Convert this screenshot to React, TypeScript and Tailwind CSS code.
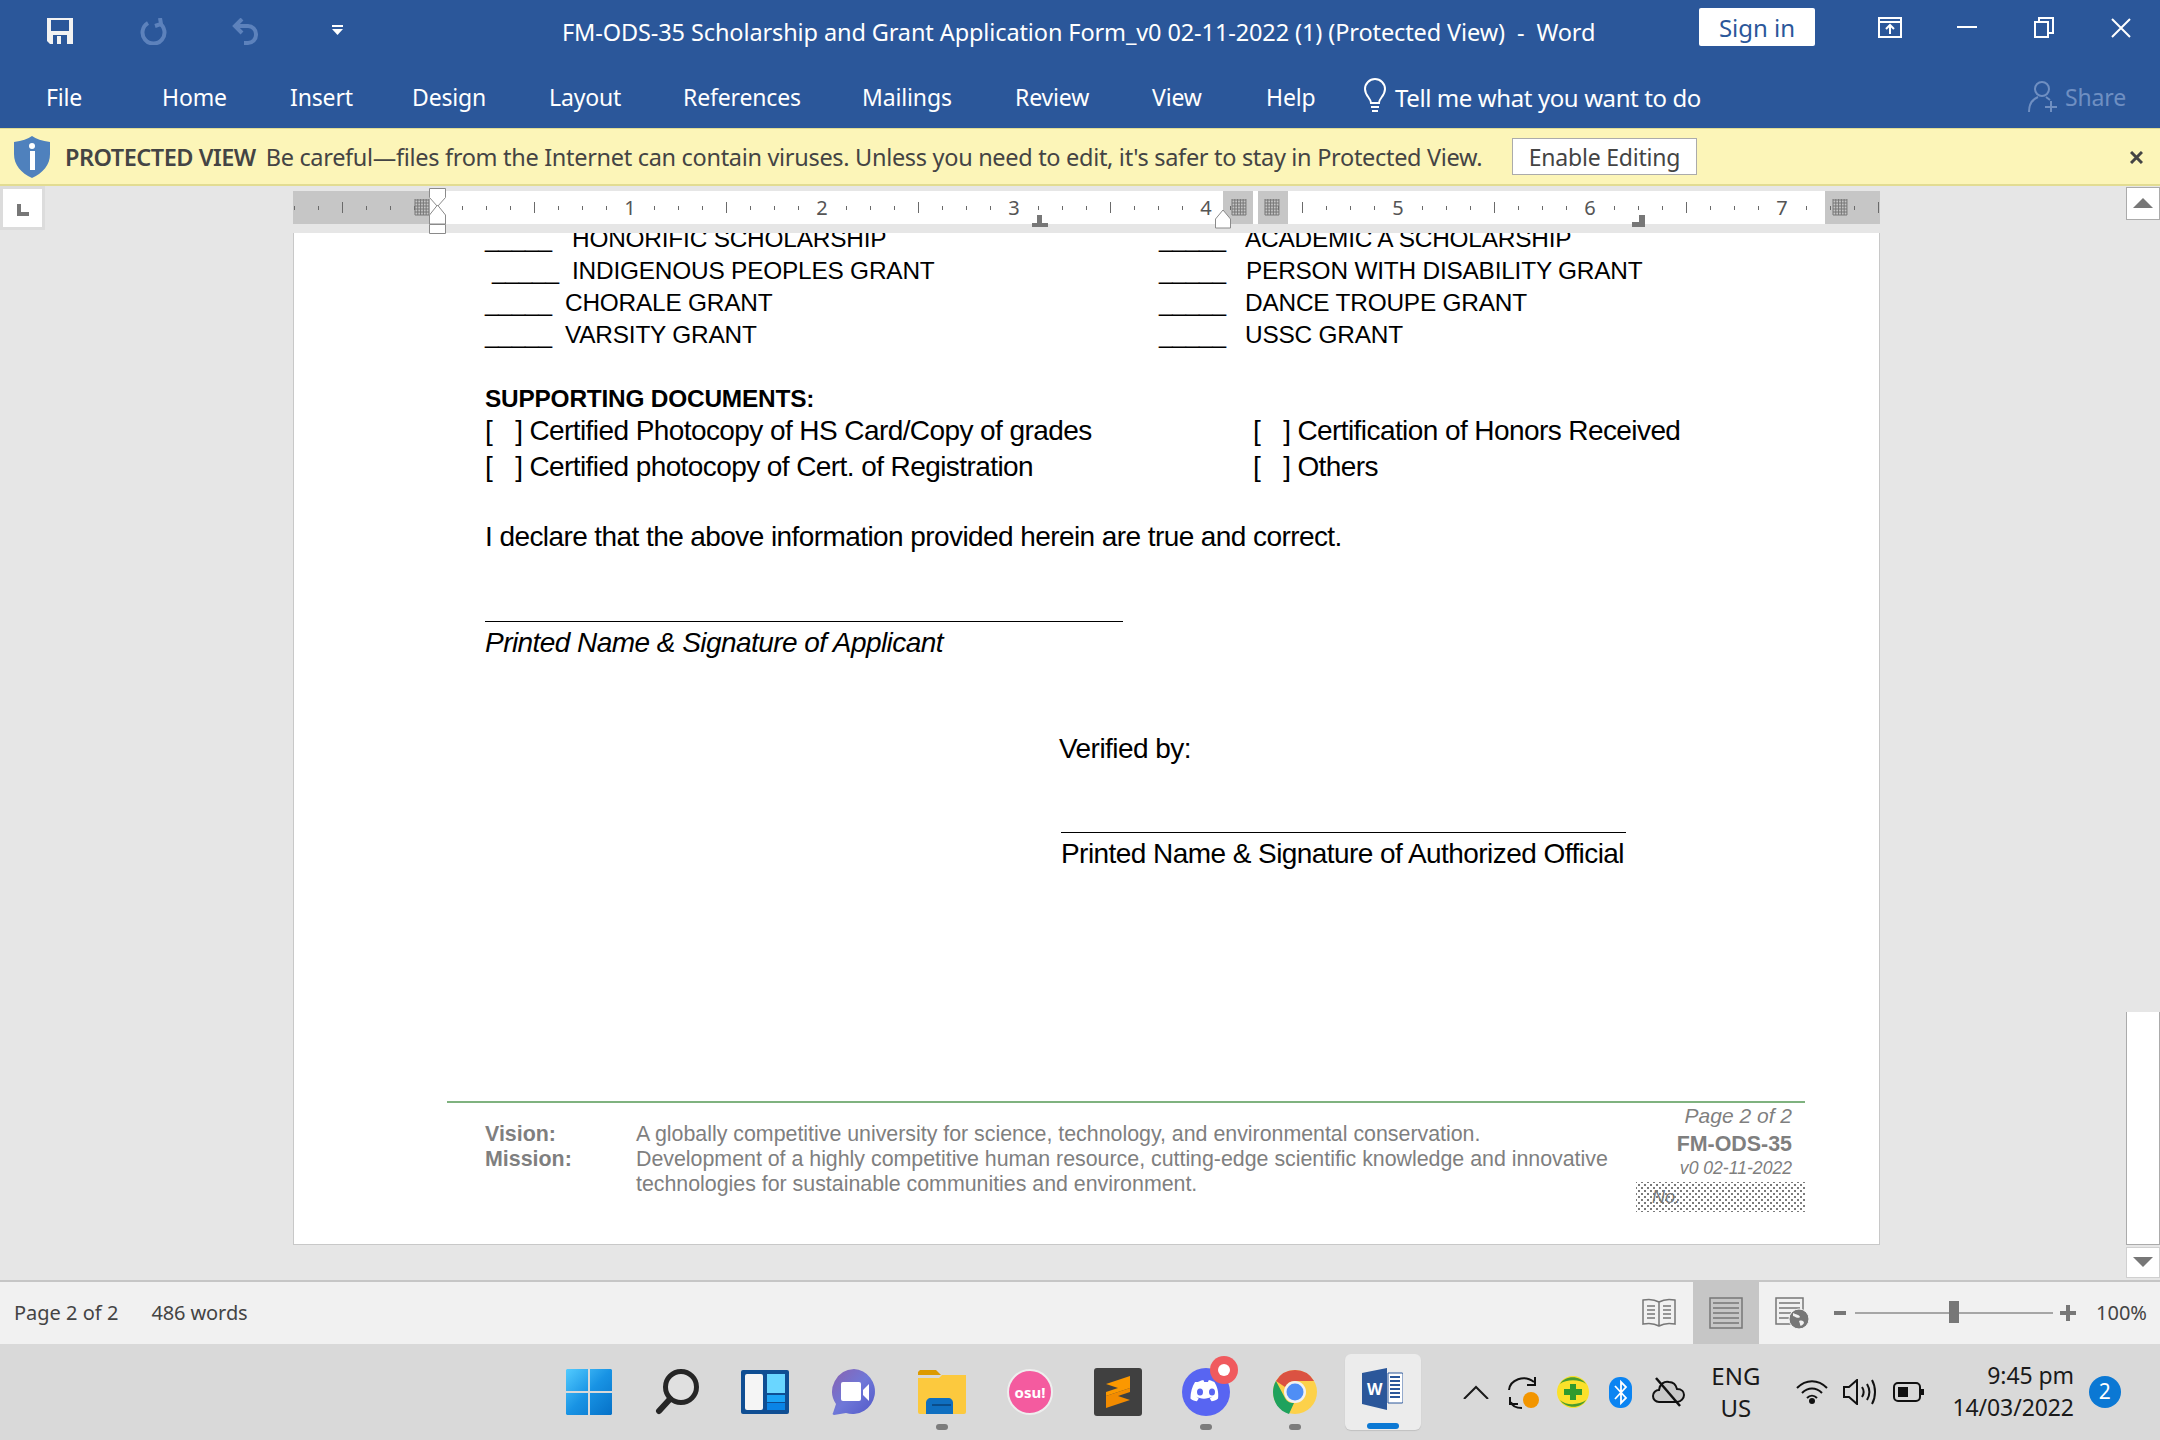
const ui = "font-['Noto_Sans',sans-serif]";

const tabs = [
  { label: 'File', w: 'w-[116px]' },
  { label: 'Home', w: 'w-[128px]' },
  { label: 'Insert', w: 'w-[122px]' },
  { label: 'Design', w: 'w-[137px]' },
  { label: 'Layout', w: 'w-[134px]' },
  { label: 'References', w: 'w-[179px]' },
  { label: 'Mailings', w: 'w-[153px]' },
  { label: 'Review', w: 'w-[137px]' },
  { label: 'View', w: 'w-[114px]' },
  { label: 'Help', w: 'w-[96px]' },
];

const grants = [
  { left: 'HONORIFIC SCHOLARSHIP', right: 'ACADEMIC A SCHOLARSHIP', leftPad: 'pl-0', leftGap: 'w-[87px]', rightGap: 'w-[86px]' },
  { left: 'INDIGENOUS PEOPLES GRANT', right: 'PERSON WITH DISABILITY GRANT', leftPad: 'pl-[7px]', leftGap: 'w-[80px]', rightGap: 'w-[87px]' },
  { left: 'CHORALE GRANT', right: 'DANCE TROUPE GRANT', leftPad: 'pl-0', leftGap: 'w-[80px]', rightGap: 'w-[86px]' },
  { left: 'VARSITY GRANT', right: 'USSC GRANT', leftPad: 'pl-0', leftGap: 'w-[80px]', rightGap: 'w-[86px]' },
];

function Ruler() {
  const ticks = [];
  for (let i = 0; i <= 66; i++) {
    const x = i * 24 + 1;
    const pos = i - 6;
    if (pos % 8 === 0 && pos !== 0) continue;
    if (i === 6 || i === 38 || i === 40) continue;
    const tall = (pos + 400) % 4 === 0;
    ticks.push(<rect key={i} x={x} y={tall ? 11 : 15} width={1} height={tall ? 11 : 4} fill="#6a6a6a" />);
  }
  return (
    <div className="relative flex h-[33px] w-[1587px]">
      <div className="w-[137px] bg-[#c6c6c6]" />
      <div className="w-[793px] bg-white" />
      <div className="w-[30px] bg-[#c6c6c6]" />
      <div className="w-[5px] bg-white" />
      <div className="w-[30px] bg-[#c6c6c6]" />
      <div className="w-[537px] bg-white" />
      <div className="w-[55px] bg-[#c6c6c6]" />
      <svg className="absolute left-0 top-[-5px] h-[46px] w-[1587px]" viewBox="0 -5 1587 46" style={{ overflow: 'visible' }}>
        {ticks}
        {[1, 2, 3, 4, 5, 6, 7].map((n) => (
          <text key={n} x={144 + n * 192 + 1} y={24} fontSize="20" fill="#555" fontFamily="Noto Sans" textAnchor="middle">{n}</text>
        ))}
        {[129, 946, 979, 1547].map((x) => (
          <g key={x} stroke="#777" strokeWidth="1">
            {[0, 3, 6, 9, 12, 15].map((d) => <line key={d} x1={x - 7} x2={x + 7} y1={9 + d} y2={9 + d} />)}
            {[0, 3, 6, 9, 12, 15].map((d) => <line key={d} x1={x - 7 + d * 0.93} x2={x - 7 + d * 0.93} y1={8} y2={24} />)}
          </g>
        ))}
        <g fill="#fff" stroke="#8a8a8a" strokeWidth="1" transform="translate(0,-5)">
          <path d="M136.5 2.5h16v9l-8 9-8-9z" />
          <path d="M144.5 19l8 10v9h-16v-9z" />
          <path d="M136.5 38.5h16v9h-16z" />
          <path d="M922.5 33v9h15v-9l-7.500-9z" />
        </g>
        <path d="M744 33h5v8h6v4h-16v-4h5z" fill="#777" transform="translate(0,-9)" />
        <path d="M1346 33h6v12h-13v-5h7z" fill="#777" transform="translate(0,-9)" />
      </svg>
    </div>
  );
}

function Page() {
  const doc = "font-['Liberation_Sans',Arial,sans-serif] text-black";
  return (
    <div className={`flex h-[1012px] w-[1587px] flex-col overflow-hidden border-x border-b border-[#c8c8c8] bg-white ${doc}`}>
      <div className="mt-[-10px] flex flex-col pl-[191px] text-[24.4px] tracking-[-0.2px]">
        {grants.map((g) => (
          <div key={g.left} className="flex h-[32px] items-center">
            <div className={`flex w-[674px] ${g.leftPad}`}>
              <span className={g.leftGap}>_____</span>
              <span>{g.left}</span>
            </div>
            <div className="flex">
              <span className={g.rightGap}>_____</span>
              <span>{g.right}</span>
            </div>
          </div>
        ))}
      </div>
      <div className="mt-[32px] pl-[191px] text-[24.4px] font-bold leading-[32px] tracking-[-0.2px]">SUPPORTING DOCUMENTS:</div>
      <div className="mt-[-2px] flex flex-col pl-[191px] text-[28px] leading-[36px] tracking-[-0.58px]">
        <div className="flex">
          <span className="w-[768px]"><span className="mr-[23px]">[</span><span className="mr-[7px]">]</span>Certified Photocopy of HS Card/Copy of grades</span>
          <span><span className="mr-[23px]">[</span><span className="mr-[7px]">]</span>Certification of Honors Received</span>
        </div>
        <div className="flex">
          <span className="w-[768px]"><span className="mr-[23px]">[</span><span className="mr-[7px]">]</span>Certified photocopy of Cert. of Registration</span>
          <span><span className="mr-[23px]">[</span><span className="mr-[7px]">]</span>Others</span>
        </div>
      </div>
      <div className="mt-[34px] pl-[191px] text-[28px] leading-[36px] tracking-[-0.58px]">I declare that the above information provided herein are true and correct.</div>
      <div className="ml-[191px] mt-[66px] h-px w-[638px] bg-black" />
      <div className="mt-[3px] pl-[191px] text-[28px] italic leading-[36px] tracking-[-0.55px]">Printed Name &amp; Signature of Applicant</div>
      <div className="mt-[70px] pl-[765px] text-[28px] leading-[36px] tracking-[-0.55px]">Verified by:</div>
      <div className="ml-[767px] mt-[65px] h-px w-[565px] bg-black" />
      <div className="mt-[3px] pl-[767px] text-[28px] leading-[36px] tracking-[-0.56px]">Printed Name &amp; Signature of Authorized Official</div>

      <div className="mt-auto h-[143px] pl-[153px] pr-[74px]">
        <div className="h-[2px] bg-[#7fb27f]" />
        <div className="flex text-[#7f7f7f]">
          <div className="flex pl-[38px] pt-[19px] text-[21.4px] leading-[25px]">
            <div className="w-[151px] font-bold">
              <div>Vision:</div>
              <div>Mission:</div>
            </div>
            <div className="w-[990px] tracking-[-0.02px]">
              A globally competitive university for science, technology, and environmental conservation.
              <br />
              Development of a highly competitive human resource, cutting-edge scientific knowledge and innovative
              <br />
              technologies for sustainable communities and environment.
            </div>
          </div>
          <div className="ml-auto flex w-[169px] flex-col items-end">
            <div className="pr-[13px] text-[21px] italic leading-[26px]">Page 2 of 2</div>
            <div className="pr-[13px] pt-[1px] text-[21.4px] font-bold leading-[28px]">FM-ODS-35</div>
            <div className="pr-[13px] text-[17.6px] italic leading-[20px]">v0 02-11-2022</div>
            <div className="mt-[4px] h-[30px] w-[169px] bg-[radial-gradient(#7a7a7a_1.2px,transparent_1.3px),radial-gradient(#7a7a7a_1.2px,transparent_1.3px)] bg-[length:6px_6px] bg-[position:0_0,3px_3px] pl-[16px] text-[18px] italic leading-[30px] text-[#777]">No.</div>
          </div>
        </div>
      </div>
    </div>
  );
}

function Scrollbar() {
  return (
    <div className="flex w-[34px] flex-col pt-[1px]">
      <div className="flex h-[33px] items-center justify-center border border-[#ababab] bg-white">
        <div className="h-0 w-0 border-x-[10px] border-b-[10px] border-x-transparent border-b-[#777]" />
      </div>
      <div className="flex-1 pt-[792px]">
        <div className="h-[233px] border-x border-b border-[#ababab] bg-white" />
      </div>
      <div className="mt-[2px] flex h-[32px] items-center justify-center border border-[#d0d0d0] bg-white">
        <div className="h-0 w-0 border-x-[10px] border-t-[10px] border-x-transparent border-t-[#777]" />
      </div>
      <div className="h-[2px]" />
    </div>
  );
}

function TaskIcon({ children, dot }: { children: React.ReactNode; dot?: boolean }) {
  return (
    <div className="relative flex h-[96px] w-[88.2px] items-center justify-center">
      {children}
      {dot && <div className="absolute left-[38px] top-[80px] h-[6px] w-[12px] rounded-full bg-[#7c7c7c]" />}
    </div>
  );
}

export default function App() {
  return (
    <div className={`relative flex h-[1440px] w-[2160px] flex-col overflow-hidden bg-[#e6e6e6] ${ui}`}>
      {/* title bar */}
      <div className="h-[128px] bg-[#2b579a] text-white">
        <div className="relative flex h-[64px] items-start">
          <div className="flex items-start pl-[47px] pt-[18px]">
            <svg width="26" height="26" viewBox="0 0 26 26">
              <path d="M0 0h26v26H3l-3-3z" fill="#f2f2f2" />
              <rect x="4" y="2" width="18" height="11" fill="#2b579a" />
              <rect x="6" y="17" width="14" height="9" fill="#2b579a" />
              <rect x="10" y="18" width="4" height="8" fill="#f2f2f2" />
            </svg>
            <svg className="ml-[67px]" width="27" height="27" viewBox="0 0 27 27" fill="none" stroke="#5d82bc" strokeWidth="4">
              <path d="M8 5A11 11 0 1 0 19 5" />
              <path d="M18 1l1 6-6 2" transform="translate(2,-1)" />
            </svg>
            <svg className="ml-[65px]" width="27" height="27" viewBox="0 0 27 27" fill="none" stroke="#5d82bc" strokeWidth="4">
              <path d="M10 1L3 8l7 7" />
              <path d="M3 8h13a8 8 0 0 1 8 8v1a8 8 0 0 1-8 8h-4" />
            </svg>
            <svg className="ml-[73px] mt-[7px]" width="11" height="10" viewBox="0 0 11 10" fill="#fff">
              <rect x="0" y="0" width="11" height="2" />
              <path d="M0 4h11L5.500 10z" />
            </svg>
          </div>
          <div className="absolute left-[562px] top-[14px] text-[23.5px] leading-[36px] tracking-[-0.11px] whitespace-pre">FM-ODS-35 Scholarship and Grant Application Form_v0 02-11-2022 (1) (Protected View)  -  Word</div>
          <div className="ml-auto flex items-start pr-[29px]">
            <div className="mt-[8px] flex h-[38px] w-[116px] items-center justify-center rounded-[2px] bg-white pt-[2px] text-[24px] text-[#2b579a]">Sign in</div>
            <svg className="ml-[63px] mt-[17px]" width="24" height="21" viewBox="0 0 24 21" fill="none" stroke="#fff" strokeWidth="2">
              <path d="M1 1h22v19H1zM1 5h22M12 17V8M8 12l4-4 4 4" />
            </svg>
            <div className="ml-[55px] mt-[26px] h-[2px] w-[20px] bg-white" />
            <svg className="ml-[57px] mt-[17px]" width="20" height="21" viewBox="0 0 20 21" fill="none" stroke="#fff" strokeWidth="2">
              <path d="M1 5h13v15H1zM5 5V1h14v15h-5" />
            </svg>
            <svg className="ml-[57px] mt-[18px]" width="20" height="20" viewBox="0 0 20 20" stroke="#fff" strokeWidth="2">
              <path d="M1 1l18 18M19 1L1 19" />
            </svg>
          </div>
        </div>
        <div className="flex h-[64px] items-center pl-[46px] pt-[3px] text-[23px] tracking-[-0.15px]">
          {tabs.map((t) => (
            <div key={t.label} className={t.w}>{t.label}</div>
          ))}
          <svg className="ml-[1px] mt-[-3px]" width="24" height="36" viewBox="0 0 24 36" fill="none" stroke="#fff" strokeWidth="2">
            <path d="M8 25c0-5-6-7-6-14a10 10 0 0 1 20 0c0 7-6 9-6 14zM8 29h8M9 33h6" />
          </svg>
          <div className="ml-[8px] text-[24px] tracking-[-0.4px]">Tell me what you want to do</div>
          <div className="ml-auto flex items-center pr-[34px] text-[#6f8fc2]">
            <svg className="mt-[-3px]" width="30" height="33" viewBox="0 0 30 33" fill="none" stroke="#6f8fc2" strokeWidth="2">
              <circle cx="14" cy="9" r="7" />
              <path d="M1 32c0-8 4-13 9-15M18 17l4 3M23 21v11M17 27h12" />
            </svg>
            <span className="ml-[7px]">Share</span>
          </div>
        </div>
      </div>

      {/* protected view bar */}
      <div className="flex h-[58px] items-center border-b-2 border-t border-b-[#e2dc92] border-t-[#e2dc92] bg-[#fcf5b8] pt-[3px] text-[23.5px] text-[#444]">
        <svg className="ml-[14px] mt-[-3px]" width="36" height="42" viewBox="0 0 36 42">
          <path d="M18 0c4 3 10 5 18 6v12c0 11-7 19-18 24C7 37 0 29 0 18V6c8-1 14-3 18-6z" fill="#4f81bd" />
          <circle cx="18" cy="10" r="3" fill="#fff" />
          <rect x="16" y="15" width="5" height="19" fill="#fff" />
        </svg>
        <span className="ml-[15px] font-semibold tracking-[-0.5px]">PROTECTED VIEW</span>
        <span className="ml-[10px] tracking-[-0.31px]">Be careful—files from the Internet can contain viruses. Unless you need to edit, it's safer to stay in Protected View.</span>
        <div className="absolute left-[1512px] top-[138px] flex h-[37px] w-[185px] items-center justify-center border border-[#ababab] bg-white pt-[2px] text-[23px] tracking-[-0.2px]">Enable Editing</div>
        <svg className="absolute left-[2130px] top-[151px]" width="13" height="13" viewBox="0 0 13 13" stroke="#444" strokeWidth="3">
          <path d="M1 1l11 11M12 1L1 12" />
        </svg>
      </div>

      {/* document area */}
      <div className="flex h-[1094px]">
        <div className="w-[293px]">
          <div className="flex h-[44px] w-[45px] items-center justify-center border-[3px] border-[#dcdcdc] bg-white">
            <svg className="mt-[4px]" width="12" height="12" viewBox="0 0 12 12" fill="#777">
              <path d="M0 0h4v8h8v4H0z" />
            </svg>
          </div>
        </div>
        <div className="flex flex-col pt-[5px]">
          <Ruler />
          <div className="mt-[9px]">
            <Page />
          </div>
        </div>
        <div className="flex-1" />
        <Scrollbar />
      </div>

      {/* status bar */}
      <div className="flex h-[64px] items-center border-t-2 border-[#c6c6c6] bg-[#f1f1f1] text-[20px] text-[#444]">
        <span className="ml-[14px]">Page 2 of 2</span>
        <span className="ml-[33px] tracking-[-0.1px]">486 words</span>
        <div className="ml-auto flex h-full items-center">
          <svg width="34" height="30" viewBox="0 0 34 30" fill="none" stroke="#777" strokeWidth="1.500">
            <path d="M17 4C12 1 6 1 1 2v24c5-1 11-1 16 2 5-3 11-3 16-2V2c-5-1-11-1-16 2zM17 4v24M5 8h8M5 12h8M5 16h8M5 20h8M21 8h8M21 12h8M21 16h8M21 20h8" />
          </svg>
          <div className="ml-[17px] flex h-full w-[66px] items-center justify-center bg-[#c6c6c6]">
            <svg width="34" height="32" viewBox="0 0 34 32" fill="none" stroke="#777" strokeWidth="1.500">
              <path d="M1 1h32v30H1zM4 6h26M4 11h26M4 16h26M4 21h26M4 26h26" />
            </svg>
          </div>
          <svg className="ml-[16px]" width="34" height="32" viewBox="0 0 34 32">
            <path d="M1 1h27v26H1zM4 6h21M4 11h21M4 16h12M4 21h10" fill="none" stroke="#777" strokeWidth="1.500" />
            <circle cx="24" cy="22" r="10" fill="#777" stroke="#f1f1f1" strokeWidth="1" />
            <path d="M18 16c3 2 6 1 7 4-2 2-4 0-7-1zM24 24c3-1 5 0 5 2-2 3-4 4-4 1z" fill="#f1f1f1" />
          </svg>
          <div className="ml-[25px] h-[4px] w-[12px] bg-[#777]" />
          <div className="relative ml-[9px] h-[2px] w-[198px] bg-[#a6a6a6]">
            <div className="absolute left-[94px] top-[-11px] h-[22px] w-[10px] bg-[#777]" />
          </div>
          <div className="relative ml-[7px] h-[16px] w-[16px]">
            <div className="absolute left-0 top-[6px] h-[4px] w-[16px] bg-[#777]" />
            <div className="absolute left-[6px] top-0 h-[16px] w-[4px] bg-[#777]" />
          </div>
          <span className="ml-[20px] w-[64px]">100%</span>
        </div>
      </div>

      {/* taskbar */}
      <div className="flex h-[96px] items-start bg-[#d9d9d9] pl-[545px] text-[#1a1a1a]">
        <TaskIcon>
          <svg width="46" height="46" viewBox="0 0 46 46">
            <defs>
              <linearGradient id="win" x1="0" y1="0" x2="1" y2="1">
                <stop offset="0" stopColor="#52cbff" />
                <stop offset="0.5" stopColor="#1893e4" />
                <stop offset="1" stopColor="#0671c7" />
              </linearGradient>
            </defs>
            <path d="M1 0h21v22H0V1zM24 0h21l1 1v21H24zM0 24h22v22H1l-1-1zM24 24h22v21l-1 1H24z" fill="url(#win)" />
          </svg>
        </TaskIcon>
        <TaskIcon>
          <svg width="44" height="46" viewBox="0 0 44 46" fill="none" stroke="#262626" strokeLinecap="round">
            <circle cx="26" cy="18" r="15.500" fill="#e0e0e0" strokeWidth="5" />
            <path d="M15 30L4 42" strokeWidth="6" />
          </svg>
        </TaskIcon>
        <TaskIcon>
          <svg width="48" height="44" viewBox="0 0 48 44">
            <rect width="48" height="44" rx="2" fill="#0f4e93" />
            <rect x="4" y="4" width="18" height="36" rx="2" fill="#f5f5f5" />
            <rect x="26" y="4" width="18" height="19" fill="#6ad6ff" />
            <rect x="26" y="25" width="18" height="7" fill="#1ba3f5" />
            <rect x="26" y="33" width="18" height="7" fill="#0a84e6" />
          </svg>
        </TaskIcon>
        <TaskIcon>
          <svg width="46" height="46" viewBox="0 0 46 46">
            <defs>
              <linearGradient id="meet" x1="0" y1="0" x2="1" y2="1">
                <stop offset="0" stopColor="#8a62b0" />
                <stop offset="0.5" stopColor="#6f78d8" />
                <stop offset="1" stopColor="#5258c8" />
              </linearGradient>
            </defs>
            <path d="M23 0a22.500 22.500 0 1 1-8 44l-12 2c-1 0-2-1-1-2l3-9A22.500 22.500 0 0 1 23 0z" fill="url(#meet)" />
            <rect x="10" y="13" width="20" height="19" rx="2" fill="#fff" />
            <path d="M32 21l6-6v17l-6-6z" fill="#fff" />
          </svg>
        </TaskIcon>
        <TaskIcon dot>
          <svg width="48" height="44" viewBox="0 0 48 44">
            <path d="M0 2l2-2h16l5 5h-23z" fill="#dc9a00" />
            <path d="M0 8h21l3-3h24v37a2 2 0 0 1-2 2H2a2 2 0 0 1-2-2z" fill="#fcc93e" />
            <path d="M8 44V33c0-3 2-5 5-5h17c3 0 5 2 5 5v11z" fill="#0f6fc0" />
            <rect x="14" y="34" width="19" height="2" fill="#0a4d8a" />
          </svg>
        </TaskIcon>
        <TaskIcon>
          <div className="flex h-[46px] w-[46px] items-center justify-center rounded-full border-2 border-[#eeeeee] bg-[#f45b9f] text-[15px] font-bold text-white">osu!</div>
        </TaskIcon>
        <TaskIcon>
          <svg width="48" height="48" viewBox="0 0 48 48">
            <rect width="48" height="48" rx="3" fill="#404040" />
            <path d="M36 8v12L12 28V24l12-4-12-4V16z" fill="#fb9800" />
            <path d="M12 40V28l24-8v4l-12 4 12 4z" fill="#f28b00" />
          </svg>
        </TaskIcon>
        <TaskIcon dot>
          <div className="relative h-[48px] w-[48px]">
            <svg width="48" height="48" viewBox="0 0 48 48">
              <circle cx="24" cy="24" r="24" fill="#5865f2" />
              <path d="M15 14c3-1 5-2 6-2l1 2h4l1-2c1 0 3 1 6 2 3 5 5 11 4 18-2 2-5 3-7 3l-2-3 3-2c-6 3-13 3-18 0l3 2-2 3c-2 0-5-1-7-3 0-7 2-13 5-18z" fill="#fff" transform="translate(2,1) scale(0.92)" />
              <ellipse cx="18" cy="24" rx="3" ry="3.500" fill="#5865f2" />
              <ellipse cx="30" cy="24" rx="3" ry="3.500" fill="#5865f2" />
            </svg>
            <div className="absolute left-[28px] top-[-12px] flex h-[28px] w-[28px] items-center justify-center rounded-full bg-[#f05a5e]">
              <div className="h-[12px] w-[12px] rounded-full bg-white" />
            </div>
          </div>
        </TaskIcon>
        <TaskIcon dot>
          <svg width="44" height="44" viewBox="0 0 44 44">
            <circle cx="22" cy="22" r="22" fill="#fdd14a" />
            <path d="M22 0a22 22 0 0 1 19 11H22a11 11 0 0 0-10 6L3 11A22 22 0 0 1 22 0z" fill="#db5242" />
            <path d="M3 11l9 17c2 4 5 5 9 5l-5 11C6 41 0 32 0 22c0-4 1-8 3-11z" fill="#1fa25d" />
            <circle cx="22" cy="22" r="11" fill="#f1f1f1" />
            <circle cx="22" cy="22" r="8.500" fill="#4f8ef5" />
          </svg>
        </TaskIcon>
        <TaskIcon>
          <div className="absolute left-[6px] top-[10px] flex h-[76px] w-[76px] items-center justify-center rounded-[6px] bg-[#ececec] pb-[6px] shadow-[0_1px_1px_#c0c0c0]">
            <svg width="41" height="42" viewBox="0 0 41 42">
              <path d="M26 5h14a1 1 0 0 1 1 1v28a1 1 0 0 1-1 1H26z" fill="#fff" stroke="#2b579a" strokeWidth="1" />
              <path d="M28 9h10M28 13h10M28 17h10M28 21h10M28 25h10M28 29h10" stroke="#2b579a" strokeWidth="2" />
              <path d="M25 0v42L0 36V5z" fill="#2b579a" />
              <text x="5" y="27" fill="#fff" fontSize="16" fontWeight="700" fontFamily="Noto Sans">W</text>
            </svg>
            <div className="absolute bottom-[1px] left-[22px] h-[6px] w-[32px] rounded-full bg-[#0b78d4]" />
          </div>
        </TaskIcon>

        {/* tray */}
        <div className="flex h-[96px] items-center">
          <svg className="ml-[36px]" width="26" height="14" viewBox="0 0 26 14" fill="none" stroke="#1a1a1a" strokeWidth="2">
            <path d="M1 14L13 2l12 12" />
          </svg>
          <svg className="ml-[19px] mt-[2px]" width="32" height="34" viewBox="0 0 32 34" fill="none" stroke="#111" strokeWidth="2">
            <path d="M1 14C2 4 16 -2 26 6M27 1v8h-8M14 32C8 32 4 30 3 26M2 21v7h8" />
            <circle cx="23" cy="24" r="8" fill="#f29500" stroke="none" />
          </svg>
          <svg className="ml-[17px]" width="32" height="32" viewBox="0 0 32 32">
            <circle cx="16" cy="16" r="16" fill="#fbe12a" />
            <path d="M3 8c5-9 20-9 26 0-6-5-20-5-26 0zM29 24c-5 9-20 9-26 0 6 6 20 5 26 0z" fill="#4b9c2f" />
            <path d="M13 8h6v5h6v6h-6v5h-6v-5H7v-6h6z" fill="#2f9a2e" />
          </svg>
          <svg className="ml-[20px]" width="23" height="31" viewBox="0 0 23 31">
            <rect width="23" height="31" rx="11" fill="#0b84f2" />
            <path d="M6 9l11 12-5 5V5l5 5-11 12" fill="none" stroke="#fff" strokeWidth="1.800" />
          </svg>
          <svg className="ml-[20px]" width="33" height="30" viewBox="0 0 33 30" fill="none" stroke="#111" strokeWidth="2">
            <path d="M7 25a6 6 0 0 1 0-12c1-6 5-9 10-8 4 0 7 3 8 7 5 0 7 3 7 6s-3 7-7 7z" fill="#c9c9c9" />
            <path d="M4 1l24 28" strokeWidth="2.500" />
          </svg>
          <div className="ml-[33px] w-[36px] text-center text-[24px] leading-[32px]">
            <div className="ml-[-10px] w-[56px]">ENG</div>
            <div className="ml-[-10px] w-[56px]">US</div>
          </div>
          <svg className="ml-[42px]" width="32" height="24" viewBox="0 0 32 24" fill="none" stroke="#111" strokeWidth="2">
            <path d="M1 8c9-9 21-9 30 0M6 13c6-6 14-6 20 0M11 18c3-3 7-3 10 0" />
            <circle cx="16" cy="21" r="3" fill="#111" stroke="none" />
          </svg>
          <svg className="ml-[15px]" width="33" height="26" viewBox="0 0 33 26" fill="none" stroke="#111" strokeWidth="2">
            <path d="M1 8h5l8-7v24l-8-7H1zM19 8c2 3 2 7 0 10M24 5c3 5 3 11 0 16M29 1c4 7 4 17 0 24" />
          </svg>
          <svg className="ml-[17px]" width="31" height="20" viewBox="0 0 31 20">
            <rect x="1" y="1" width="26" height="18" rx="4" fill="none" stroke="#111" strokeWidth="2" />
            <rect x="5" y="5" width="10" height="10" fill="#111" />
            <rect x="28" y="7" width="3" height="6" fill="#111" />
          </svg>
          <div className="ml-[30px] mt-[-2px] w-[120px] text-right text-[23px] leading-[32px] tracking-[-0.1px]">
            <div>9:45 pm</div>
            <div className="ml-[-30px] w-[150px] whitespace-nowrap">14/03/2022</div>
          </div>
          <div className="ml-[15px] flex h-[32px] w-[32px] items-center justify-center rounded-full bg-[#0b78d4] text-[21px] text-white">2</div>
        </div>
      </div>
    </div>
  );
}
